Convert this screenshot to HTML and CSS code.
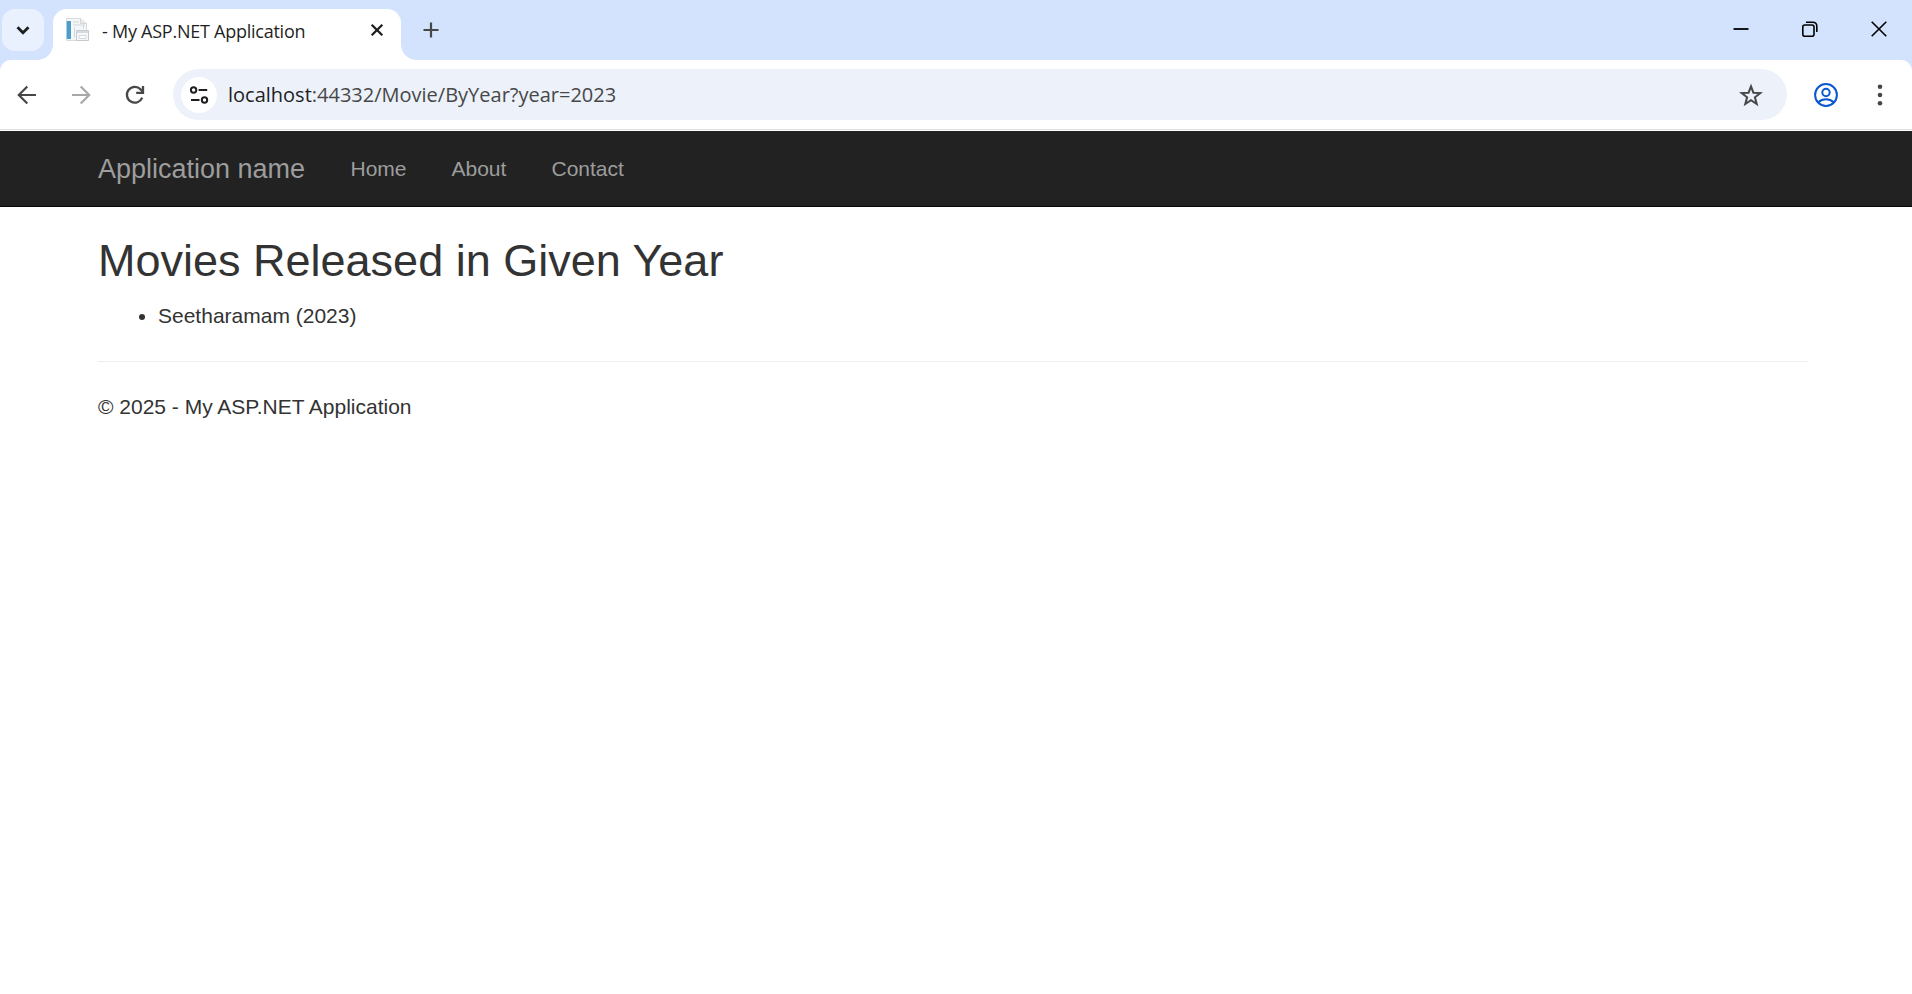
FILE: index.html
```html
<!DOCTYPE html>
<html lang="en">
<head>
<meta charset="utf-8">
<title> - My ASP.NET Application</title>
<link rel="stylesheet" href="styles.css">
</head>
<body>
<header class="browser">
  <div class="tab-strip">
    <button class="tab-search" aria-label="Search tabs"><svg width="42" height="42" viewBox="0 0 42 42"><path d="M15.500 18.200 21 23.700l5.500-5.500" fill="none" stroke="#1f1f1f" stroke-width="2.800"/></svg></button>
    <div class="tab">
      <svg class="favicon" width="24" height="24" viewBox="0 0 24 24">
        <path d="M1.500.5h14l6 5v17h-20z" fill="#f5f6f7" stroke="#d9dbdd"/>
        <path d="M15.500.5v5h6" fill="#e9ebed" stroke="#d2d4d6"/>
        <path d="M2 3h4v18H2z" fill="#4d9dc9"/><path d="M1 3h1v18H1z" fill="#a5cfe4"/>
        <path d="M8 4h6M8 7h12M9.500 9.500v10M18.500 7v4" stroke="#d4d7da"/>
        <path d="M11.500 12.500h12v10h-12z" fill="#f6f7f8" stroke="#c6c9ce"/>
        <path d="M12 14h11" stroke="#d7dade" stroke-width="2"/><path d="M14 17.500h7v3h-7z" fill="#fff" stroke="#d5d8dc"/>
      </svg>
      <span class="tab-title">- My ASP.NET Application</span>
      <svg class="tab-close" width="14" height="14" viewBox="0 0 14 14"><path d="m1.700 1.700 10.600 10.600m0-10.600L1.700 12.300" stroke="#1f1f1f" stroke-width="2.300"/></svg>
    </div>
    <svg class="new-tab" width="16" height="16" viewBox="0 0 16 16"><path d="M8 .5v15M.5 8h15" stroke="#474747" stroke-width="2.200"/></svg>
    <div class="window-controls">
      <svg width="16" height="16" viewBox="0 0 16 16"><path d="M.5 8h15" stroke="#000" stroke-width="1.800"/></svg>
      <svg width="16" height="16" viewBox="0 0 16 16" fill="none" stroke="#000" stroke-width="1.600"><rect x=".8" y="4" width="11.200" height="11.200" rx="2"/><path d="M4 1.200h6.700Q14.800 1.200 14.800 5.300V11"/></svg>
      <svg width="16" height="16" viewBox="0 0 16 16"><path d="m.7.7 14.600 14.600m0-14.600L.7 15.300" stroke="#000" stroke-width="1.600"/></svg>
    </div>
  </div>
  <div class="toolbar">
    <nav class="history">
      <svg width="20" height="20" viewBox="0 0 20 20" fill="none" stroke="#474747" stroke-width="2.200"><path d="M19 10H2.500M10.300 1.500 1.800 10l8.500 8.500"/></svg>
      <svg width="20" height="20" viewBox="0 0 20 20" fill="none" stroke="#a8a8a8" stroke-width="2.200"><path d="M1 10h16.500M9.700 1.500l8.500 8.500-8.500 8.500"/></svg>
      <svg width="20" height="20" viewBox="0 0 20 20" fill="none" stroke="#474747" stroke-width="2.300"><path d="M17.200 12.600A7.900 7.900 0 1 1 15.700 4.500L18 7"/><path d="M18 1v6.800h-6.800"/></svg>
    </nav>
    <div class="omnibox">
      <span class="site-info"><svg width="20" height="20" viewBox="0 0 20 20" fill="none" stroke="#1f1f1f" stroke-width="2"><circle cx="4.600" cy="5" r="2.700"/><path d="M9.600 5h8.600M2 15h8.500"/><circle cx="15.500" cy="15" r="2.700"/></svg></span>
      <span class="url"><span class="host">localhost</span>:44332/Movie/ByYear?year=2023</span>
      <svg class="star" width="24" height="24" viewBox="0 0 24 24"><path d="m12 3.300 2.400 6.400 6.900.4-5.400 4.200 1.800 6.700-5.700-3.900L6.300 21l1.800-6.700-5.400-4.200 6.900-.4z" fill="none" stroke="#474747" stroke-width="2"/></svg>
    </div>
    <svg class="profile" width="24" height="24" viewBox="0 0 24 24" fill="none" stroke="#0b57d0" stroke-width="2"><circle cx="12" cy="12" r="10.900"/><circle cx="12" cy="9.500" r="3.700"/><path d="M4.400 19.200C8.500 15.400 15.500 15.400 19.600 19.200"/></svg>
    <svg class="menu" width="6" height="22" viewBox="0 0 6 22" fill="#474747"><circle cx="3" cy="2.800" r="2.300"/><circle cx="3" cy="11" r="2.300"/><circle cx="3" cy="19.200" r="2.300"/></svg>
  </div>
</header>
<div class="navbar">
  <a class="brand">Application name</a>
  <a class="nav-link home">Home</a>
  <a class="nav-link about">About</a>
  <a class="nav-link contact">Contact</a>
</div>
<main class="body-content">
  <h2>Movies Released in Given Year</h2>
  <ul><li>Seetharamam (2023)</li></ul>
  <hr>
  <footer>© 2025 - My ASP.NET Application</footer>
</main>
</body>
</html>
```
FILE: styles.css
```css
* { box-sizing: border-box; }
html, body { height: 100%; }
body { margin: 0; overflow: hidden; background: #fff; color: #333; font: 20px/30px "Liberation Sans", Arial, sans-serif; }
svg { display: block; flex: none; }
.browser { height: 131px; background: #d3e3fd; font-family: "Open Sans", "Noto Sans", sans-serif; }
.tab-strip { display: flex; height: 60px; padding: 9px 25px 0 2px; }
.tab-search { width: 42px; height: 42px; padding: 0; border: 0; border-radius: 13px; background: #e9f1fe; }
.tab { position: relative; display: flex; width: 348px; height: 51px; margin-left: 9px; padding-left: 12px; border-radius: 14px 14px 0 0; background: #fff; }
.tab::before, .tab::after { content: ""; position: absolute; bottom: 0; width: 15px; height: 15px; }
.tab::before { right: 100%; background: radial-gradient(circle at 0 0, transparent 14.500px, #fff 15px); }
.tab::after { left: 100%; background: radial-gradient(circle at 100% 0, transparent 14.500px, #fff 15px); }
.favicon { margin-top: 9px; }
.tab-title { width: 210px; margin: 7px 0 0 13px; color: #1f1f1f; font-size: 18px; line-height: 30px; letter-spacing: -.25px; white-space: nowrap; }
.tab-close { margin: 14px 0 0 58px; }
.new-tab { margin: 13px 0 0 22px; }
.window-controls { display: flex; gap: 53px; margin: 12px 0 0 auto; }
.toolbar { display: flex; align-items: center; height: 71px; padding-bottom: 2px; border-radius: 11px 11px 0 0; background: linear-gradient(#dedede, #dedede) 0 69px / 100% 1px no-repeat #fff; }
.history { display: flex; gap: 34px; width: 173px; margin-top: 1px; padding-left: 16.500px; }
.omnibox { display: flex; align-items: center; width: 1614px; height: 51px; padding: 0 24px 0 8px; border-radius: 26px; background: #ecf1fa; }
.site-info { display: flex; align-items: center; justify-content: center; width: 36px; height: 36px; border-radius: 50%; background: #fff; }
.url { margin-left: 11px; color: #474747; font-size: 20px; letter-spacing: 0; white-space: nowrap; }
.host { color: #1f1f1f; }
.star { margin-left: auto; }
.profile { margin: 1px 0 0 27px; }
.menu { margin: 1px 0 0 39px; }
.navbar { display: flex; height: 76px; padding: 0 98px; border-bottom: 1px solid #080808; background: #222; color: #9d9d9d; line-height: 75px; }
.brand { width: 252.500px; font-size: 27px; line-height: 77px; }
.nav-link { font-size: 21px; }
.home { width: 101px; }
.about { width: 100px; }
.body-content { padding: 0 104px 0 98px; font-size: 21px; }
h2 { margin: 29px 0 15px; font-size: 45px; font-weight: 500; line-height: 49.500px; }
ul { margin: 0 0 15px; padding-left: 60px; }
hr { margin: 30px 0; border: 0; border-top: 1px solid #eee; }
```
